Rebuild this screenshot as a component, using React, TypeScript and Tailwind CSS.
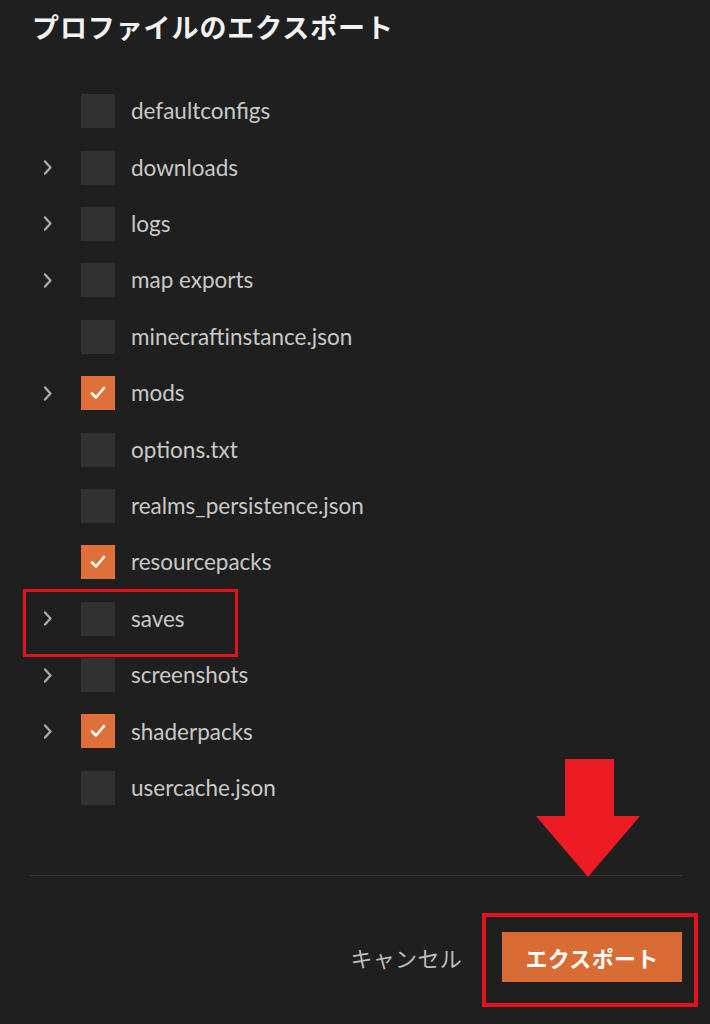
const JP = "font-['Noto_Sans_CJK_JP',sans-serif]";

type Entry = { name: string; folder?: boolean; checked?: boolean };

const entries: Entry[] = [
  { name: "defaultconfigs" },
  { name: "downloads", folder: true },
  { name: "logs", folder: true },
  { name: "map exports", folder: true },
  { name: "minecraftinstance.json" },
  { name: "mods", folder: true, checked: true },
  { name: "options.txt" },
  { name: "realms_persistence.json" },
  { name: "resourcepacks", checked: true },
  { name: "saves", folder: true },
  { name: "screenshots", folder: true },
  { name: "shaderpacks", folder: true, checked: true },
  { name: "usercache.json" },
];

function Chevron() {
  return (
    <svg width="11" height="17" viewBox="0 0 11 17" fill="none">
      <path d="M3 2.5 L8.5 8.5 L3 14.5" stroke="#a9a9a9" strokeWidth="2.4" strokeLinecap="round" strokeLinejoin="round" />
    </svg>
  );
}

function Checkbox({ checked }: { checked?: boolean }) {
  return (
    <div className={`w-[34px] h-[34px] flex items-center justify-center ${checked ? "bg-[#e0703a]" : "bg-[#313131]"}`}>
      {checked && (
        <svg width="16" height="14" viewBox="0 0 16 14" fill="none">
          <path d="M2 7.5 L6 11.5 L14 2" stroke="#ffffff" strokeWidth="2.6" strokeLinecap="round" strokeLinejoin="round" />
        </svg>
      )}
    </div>
  );
}

function Row({ entry }: { entry: Entry }) {
  return (
    <div className="h-[56.4px] flex items-center pl-[42px]">
      <div className="w-[39px] flex items-center">{entry.folder && <Chevron />}</div>
      <Checkbox checked={entry.checked} />
      <span className="ml-[16px] font-['Lato',sans-serif] text-[22.5px] text-[#c9c9c9]">{entry.name}</span>
    </div>
  );
}

export default function App() {
  return (
    <div className="relative w-[710px] h-[1024px] bg-[#1f1f1f] overflow-hidden">
      <h1 className={`${JP} pl-[32px] pt-[7px] h-[83px] text-[27px] leading-[40px] font-bold text-[#f2f2f2] tracking-[0.9px]`}>
        プロファイルのエクスポート
      </h1>

      <div className="flex flex-col">
        {entries.map((e) => (
          <Row key={e.name} entry={e} />
        ))}
      </div>

      <div className="mt-[59px] ml-[30px] w-[652px] h-px bg-[#343434]" />

      <div className="flex items-center justify-end pr-[28px] mt-[56px] gap-[40px]">
        <span className={`${JP} text-[22px] text-[#bdbdbd] tracking-[0.3px]`}>キャンセル</span>
        <button className={`${JP} w-[180px] h-[50px] bg-[#d96b35] text-white text-[22px] font-bold tracking-[0.3px]`}>
          エクスポート
        </button>
      </div>

      {/* annotation marks */}
      <div className="absolute left-[23px] top-[589px] w-[215px] h-[68px] border-[3px] border-[#e3121c]" />
      <div className="absolute left-[482px] top-[913px] w-[216px] h-[94px] border-[4px] border-[#e3121c]" />
      <svg className="absolute left-[533px] top-[756px]" width="110" height="124" viewBox="0 0 110 124">
        <path d="M32 3 H81 V60 H107 L55 121 L3 60 H32 Z" fill="#ec1c24" strokeLinejoin="round" />
      </svg>
    </div>
  );
}
